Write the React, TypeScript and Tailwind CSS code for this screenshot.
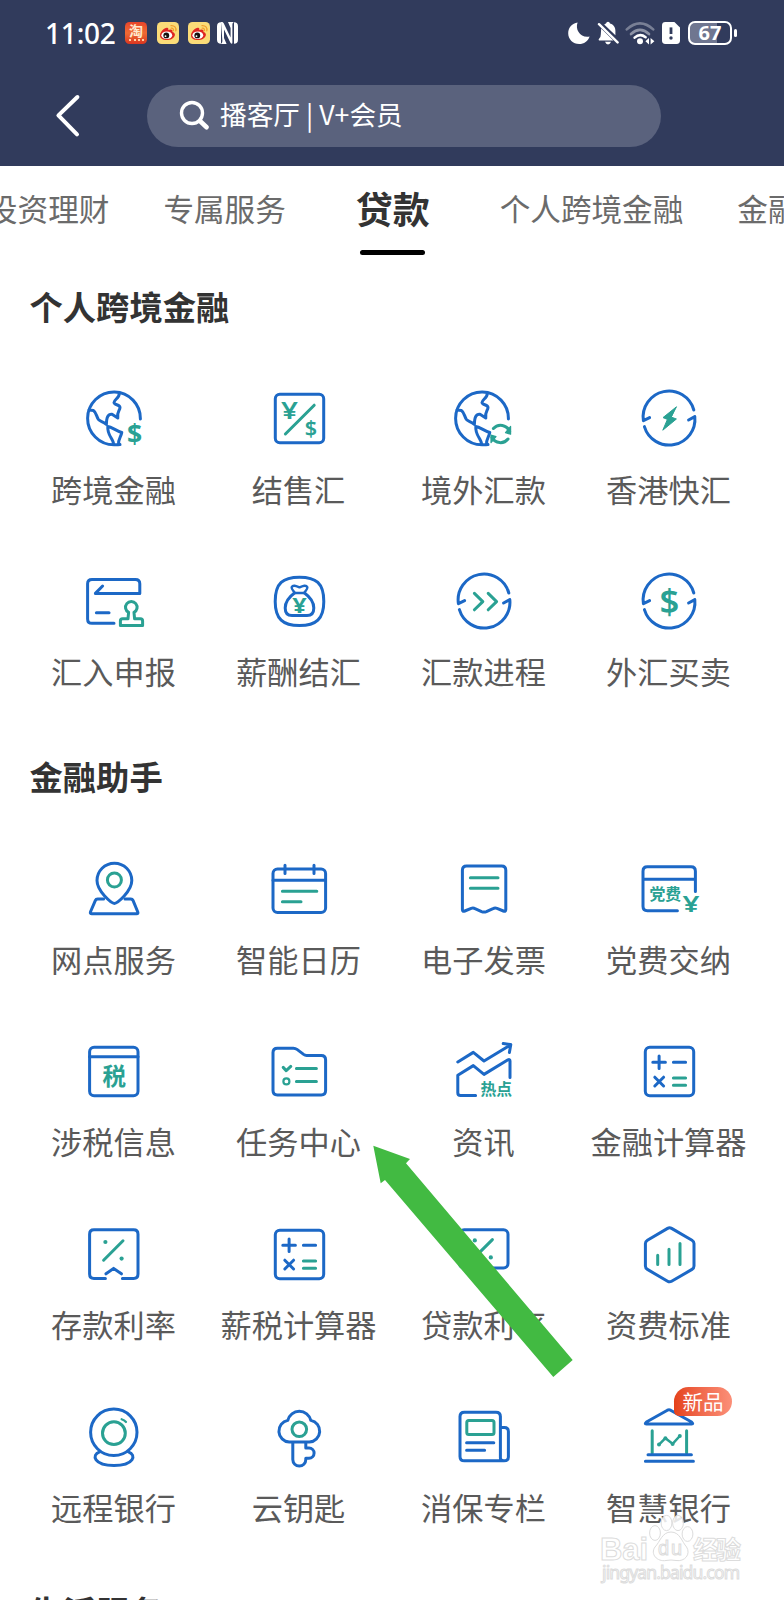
import type { ReactNode } from "react";

const BLUE = "#1c68c6";
const TEAL = "#2aa193";

/* ---------- icon helpers ---------- */

function Icon({ children }: { children: ReactNode }) {
  return (
    <svg
      className="w-[72px] h-[72px] shrink-0"
      viewBox="0 0 72 72"
      fill="none"
      stroke={BLUE}
      strokeWidth={3}
      strokeLinecap="round"
      strokeLinejoin="round"
    >
      {children}
    </svg>
  );
}

type GlyphProps = {
  x: number;
  y: number;
  size: number;
  children: string;
  latin?: boolean;
  weight?: number;
  width?: number;
};

function Glyph({ x, y, size, children, latin, weight = 600, width }: GlyphProps) {
  return (
    <text
      x={x}
      y={y}
      fontSize={size}
      fontWeight={weight}
      textAnchor="middle"
      textLength={width}
      lengthAdjust="spacingAndGlyphs"
      fill={TEAL}
      stroke="none"
      className={latin ? "font-['Noto_Sans',sans-serif]" : "font-['Noto_Sans_CJK_SC',sans-serif]"}
    >
      {children}
    </text>
  );
}

function Globe() {
  return (
    <>
      <path d="M62.4 36A26.4 26.4 0 1 0 36 61.8Q39 62 42 61.6" />
      <path d="M41.3 10.5C41.5 15 36 16.5 36 19.5C36 22 42 21.5 42 24.5C42 27.5 38.5 29 39.8 35L34 31.3C30 31 28.5 34 28.4 41.5C25.5 38.5 22 38.5 20.3 36.3C18.5 33.5 18 29 15.5 27.6L11 27" />
      <path d="M29.8 43.5C34 44 38 48 43.8 49.5C43 54 40 56 40.5 61.5M35.5 61.5C36 56 29 53 29.8 43.5" />
    </>
  );
}

function CycleRing() {
  return (
    <>
      <path d="M16.6 34.6L10.4 37.6A25.8 25.8 0 0 1 60.8 27" />
      <path d="M11.4 43.6A25.8 25.8 0 0 0 61.8 33.6L55.6 37" />
    </>
  );
}

function Calculator() {
  return (
    <Icon>
      <rect x="12.3" y="11.3" width="48.4" height="48.4" rx="4.5" />
      <path d="M19.8 26.3H32.4M26.1 20V32.6M40.4 26.3H52.6" />
      <path d="M21.8 41.2L30.6 50M30.6 41.2L21.8 50" />
      <path d="M40.4 42H52.6M40.4 49.3H52.6" stroke={TEAL} />
    </Icon>
  );
}

/* ---------- icons ---------- */

const icons: Record<string, ReactNode> = {
  globeDollar: (
    <Icon>
      <Globe />
      <Glyph x={56.7} y={60.6} size={26.5} latin weight={700}>$</Glyph>
    </Icon>
  ),
  exchange: (
    <Icon>
      <rect x="12.3" y="11.3" width="48.4" height="48.4" rx="4.5" />
      <path d="M51.2 22.2L22.4 51" stroke={TEAL} />
      <Glyph x={26.5} y={36.2} size={24} latin width={17}>¥</Glyph>
      <Glyph x={47.8} y={52.8} size={21.5} latin>$</Glyph>
    </Icon>
  ),
  globeCycle: (
    <Icon>
      <g transform="translate(-2 0)">
        <Globe />
      </g>
      <g stroke={TEAL}>
        <path d="M45.4 45.5A9.6 9.6 0 0 1 61.6 48.5M60 56A9.6 9.6 0 0 1 44 54.5" />
        <path d="M62.6 43.5V51.2L57.5 49.6ZM43 59.5V52.2L48 53.6Z" fill={TEAL} strokeWidth={1.2} />
      </g>
    </Icon>
  ),
  bolt: (
    <Icon>
      <CycleRing />
      <path d="M43.2 24L30 34.6L34.4 36.4L29.8 47.2L43.4 36L38.6 34.2Z" fill={TEAL} stroke={TEAL} strokeWidth={1} />
    </Icon>
  ),
  declare: (
    <Icon>
      <path d="M36 57.3H14Q9.6 57.3 9.6 52.9V17.8Q9.6 13.5 14 13.5H57.4Q61.8 13.5 61.8 17.8V27.4H17.4L24.6 20" />
      <path d="M18.4 46.7H31" />
      <path
        d="M50.6 46.4A5.8 5.8 0 1 1 56 46.4L56.6 52.8H62.4Q64.6 52.8 64.6 55V59.4H42.4V55Q42.4 52.8 44.6 52.8H50Z"
        stroke={TEAL}
      />
    </Icon>
  ),
  moneyBag: (
    <Icon>
      <path d="M36.5 11.2C53 11.2 60.8 17 60.8 35.4C60.8 53 53 59.6 36.5 59.6S12.2 53 12.2 35.4C12.2 17 20 11.2 36.5 11.2Z" />
      <path d="M32 27C30 24.5 28.4 23.5 28.6 21.2C30 18.6 33 20 36.5 21.4C40 20 43 18.6 44.4 21.2C44.6 23.5 43 24.5 41 27Z" strokeWidth={2.4} />
      <path d="M31.5 27C26 31 22.2 36 22.2 42Q22.2 49.6 29 49.6H44Q50.8 49.6 50.8 42C50.8 36 47 31 41.5 27" />
      <Glyph x={36.5} y={46.6} size={21.5} latin weight={700} width={14.5}>¥</Glyph>
    </Icon>
  ),
  progress: (
    <Icon>
      <CycleRing />
      <path d="M26.4 27.4L34.8 35.6L26.4 43.8M40.2 27.4L48.6 35.6L40.2 43.8" stroke={TEAL} />
    </Icon>
  ),
  dollarCycle: (
    <Icon>
      <CycleRing />
      <Glyph x={36.4} y={47.8} size={34.5} latin>$</Glyph>
    </Icon>
  ),
  branch: (
    <Icon>
      <path d="M36.4 50.4C33.6 50.4 19 38.4 19 27.6A17.4 17.4 0 0 1 53.8 27.6C53.8 38.4 39.2 50.4 36.4 50.4Z" />
      <path d="M25.6 46H19.6Q18 46 17.4 47.4L12.4 59Q12 60.8 13.8 60.8H58.6Q60.4 60.8 59.8 59L55 47.4Q54.4 46 52.8 46H47" />
      <circle cx="36.4" cy="27" r="7" stroke={TEAL} />
    </Icon>
  ),
  calendar: (
    <Icon>
      <rect x="10" y="16" width="52.6" height="43.6" rx="4.5" />
      <path d="M10 27.2H62.6M22 12.2V20.4M51 12.2V20.4" />
      <path d="M19.4 38.3H53.8M19.4 48.7H38" stroke={TEAL} />
    </Icon>
  ),
  invoice: (
    <Icon>
      <path d="M18.6 13H53.6Q57.8 13 57.8 17.2V56.6Q57.8 59 55.4 58L49 55.4Q47 54.6 45 55.6L38.4 58.6Q36 59.6 33.6 58.6L27 55.6Q25.2 54.6 23.2 55.4L16.8 58Q14.4 59 14.4 56.6V17.2Q14.4 13 18.6 13Z" />
      <path d="M22.4 24.7H50M22.4 35.2H50" stroke={TEAL} />
    </Icon>
  ),
  partyFee: (
    <Icon>
      <path d="M44.4 57.7H14.4Q10 57.7 10 53.3V18.2Q10 13.8 14.4 13.8H58Q62.4 13.8 62.4 18.2V38.4M10 26.2H62.4" />
      <Glyph x={32.2} y={47.2} size={15.8} weight={700}>党费</Glyph>
      <Glyph x={58} y={59.2} size={22} latin width={17}>¥</Glyph>
    </Icon>
  ),
  tax: (
    <Icon>
      <rect x="11.6" y="11.3" width="48.4" height="48.4" rx="4.5" />
      <path d="M11.6 20.8H60" />
      <Glyph x={36.2} y={48.6} size={23.5} weight={700}>税</Glyph>
    </Icon>
  ),
  task: (
    <Icon>
      <path d="M14.4 12.2H30.4Q32.4 12.2 34 13.4L40.6 18.4Q42 19.4 43.6 19.4H58.2Q62.6 19.4 62.6 23.8V54.6Q62.6 59 58.2 59H14.4Q10 59 10 54.6V16.6Q10 12.2 14.4 12.2Z" />
      <path d="M20.2 31.4L23.2 34.6L27.8 30.4M33.4 32.6H53.4M33.4 45.6H53.4" stroke={TEAL} />
      <circle cx="23.4" cy="45.4" r="3" stroke={TEAL} strokeWidth={2.2} />
    </Icon>
  ),
  news: (
    <Icon>
      <path d="M9.8 26L25.3 16.4L36 25L62.4 9M55.2 7.6L62.8 8.6L61.4 16.4" />
      <path d="M27.6 59.6H12.6Q9.8 59.6 9.8 56.8V39.2L25.3 29.6L36 38.4L60 23.8Q62 23 62 25V41.6" />
      <Glyph x={48.2} y={59.2} size={15.8} weight={700}>热点</Glyph>
    </Icon>
  ),
  calculator: <Calculator />,
  deposit: (
    <Icon>
      <path d="M27.4 59.4H16Q11.6 59.4 11.6 55V15.2Q11.6 10.8 16 10.8H55.6Q60 10.8 60 15.2V55Q60 59.4 55.6 59.4H44.4" />
      <path d="M28 54.8L35.6 49.4L43.4 54.8" />
      <path d="M45 21.8L25.6 41.2" stroke={TEAL} />
      <circle cx="27.4" cy="23" r="2.1" fill={TEAL} stroke="none" />
      <circle cx="43.6" cy="39.6" r="2.1" fill={TEAL} stroke="none" />
    </Icon>
  ),
  loan: (
    <Icon>
      <rect x="11.6" y="10.8" width="48.4" height="38.2" rx="4.5" />
      <path d="M44.4 20.6L25.6 39.4" stroke={TEAL} />
      <circle cx="26.8" cy="21.4" r="2.1" fill={TEAL} stroke="none" />
      <circle cx="42.8" cy="38.4" r="2.1" fill={TEAL} stroke="none" />
    </Icon>
  ),
  tariff: (
    <Icon>
      <path d="M34.6 9.4Q36.6 8.2 38.6 9.4L59 21.2Q61 22.4 61 24.6V47Q61 49.2 59 50.4L38.6 62.2Q36.6 63.4 34.6 62.2L14.4 50.4Q12.4 49.2 12.4 47V24.6Q12.4 22.4 14.4 21.2Z" />
      <path d="M24.7 36.2V45.6M36 30.2V45.6M47 24.6V45.6" stroke={TEAL} />
    </Icon>
  ),
  webcam: (
    <Icon>
      <circle cx="35.8" cy="31.3" r="23.2" />
      <circle cx="35.9" cy="32.2" r="11.4" stroke={TEAL} />
      <path d="M43.6 18.2Q46.4 19 48 21" stroke={TEAL} strokeWidth={2.2} />
      <path d="M21.6 50.8C13 54 16 64.4 36 64.4S59 54 50.4 50.8" />
    </Icon>
  ),
  cloudKey: (
    <Icon>
      <path d="M24.8 19.4A11.8 11.8 0 0 1 47.8 19.4A10.9 10.9 0 0 1 46.4 41H26.2A10.9 10.9 0 0 1 24.8 19.4Z" />
      <path d="M29.8 41.4V58.6A6.5 6.5 0 0 0 42.8 58.6V57.2H46A5.1 5.1 0 0 0 46 47H42.8V41.4" />
      <circle cx="36.3" cy="28.3" r="7.3" stroke={TEAL} />
    </Icon>
  ),
  newspaper: (
    <Icon>
      <path d="M57 59.8H16.4Q12 59.8 12 55.4V15.6Q12 11.2 16.4 11.2H48Q52.4 11.2 52.4 15.6V57Q52.4 59.8 56 59.8Q60.4 59.8 60.4 56V30.6Q60.4 26.6 56.4 26.6H53" />
      <rect x="18.8" y="19.4" width="27.2" height="14" rx="2" stroke={TEAL} />
      <path d="M18.6 41.7H45.8M18.6 49.3H36.6" />
    </Icon>
  ),
  bank: (
    <Icon>
      <path d="M34.4 9.2Q36 8.4 37.6 9.2L58.6 21Q60.8 23 58.6 23H13.4Q11.2 23 13.4 21Z" />
      <path d="M19.2 29.8V52M53.6 29.8V52" stroke={TEAL} />
      <path d="M26 43.6L32.4 37.2L39.6 42.8L46.8 35" stroke={TEAL} strokeWidth={2.5} />
      <circle cx="26" cy="43.6" r="2" fill={TEAL} stroke="none" />
      <circle cx="39.6" cy="43" r="2" fill={TEAL} stroke="none" />
      <circle cx="32.4" cy="37.2" r="2" fill={TEAL} stroke="none" />
      <circle cx="46.8" cy="35" r="2" fill={TEAL} stroke="none" />
      <path d="M15 53.8H58.4M12.4 60.3H60.4" />
    </Icon>
  ),
};

/* ---------- data ---------- */

type Item = { label: string; icon: string; badge?: string };

const sections: { title: string; items: Item[] }[] = [
  {
    title: "个人跨境金融",
    items: [
      { label: "跨境金融", icon: "globeDollar" },
      { label: "结售汇", icon: "exchange" },
      { label: "境外汇款", icon: "globeCycle" },
      { label: "香港快汇", icon: "bolt" },
      { label: "汇入申报", icon: "declare" },
      { label: "薪酬结汇", icon: "moneyBag" },
      { label: "汇款进程", icon: "progress" },
      { label: "外汇买卖", icon: "dollarCycle" },
    ],
  },
  {
    title: "金融助手",
    items: [
      { label: "网点服务", icon: "branch" },
      { label: "智能日历", icon: "calendar" },
      { label: "电子发票", icon: "invoice" },
      { label: "党费交纳", icon: "partyFee" },
      { label: "涉税信息", icon: "tax" },
      { label: "任务中心", icon: "task" },
      { label: "资讯", icon: "news" },
      { label: "金融计算器", icon: "calculator" },
      { label: "存款利率", icon: "deposit" },
      { label: "薪税计算器", icon: "calculator" },
      { label: "贷款利率", icon: "loan" },
      { label: "资费标准", icon: "tariff" },
      { label: "远程银行", icon: "webcam" },
      { label: "云钥匙", icon: "cloudKey" },
      { label: "消保专栏", icon: "newspaper" },
      { label: "智慧银行", icon: "bank", badge: "新品" },
    ],
  },
  { title: "生活服务", items: [] },
];

const tabs = ["投资理财", "专属服务", "贷款", "个人跨境金融", "金融助手"];

/* ---------- header ---------- */

function WeiboIcon() {
  return (
    <svg className="w-[22px] h-[22px]" viewBox="0 0 22 22">
      <rect width="22" height="22" rx="4.5" fill="#fbdc78" />
      <path d="M3 13.4C3 9.6 8.4 4.6 10.8 6C11.8 6.6 11.2 8 11.2 8C13 7 16.4 7 15.4 10C17.6 10.6 18.2 12 17.8 13.4C16.8 16.4 13.4 18 10 18C6 18 3 16.2 3 13.4Z" fill="#df2622" />
      <ellipse cx="9.8" cy="13.2" rx="5.4" ry="3.8" fill="#fff" />
      <circle cx="9.3" cy="13.4" r="2.9" fill="#16110f" />
      <circle cx="8.5" cy="14.2" r=".9" fill="#fff" />
      <path d="M14 3.6C17.4 3.2 19.6 5.8 18.8 8.8M14.2 6.2C16 6 16.8 7.2 16.4 8.6" fill="none" stroke="#f3a02b" strokeWidth="1.3" strokeLinecap="round" />
    </svg>
  );
}

function StatusBar() {
  return (
    <div className="flex items-center h-[66px] pl-[45px] pr-[47px] text-white">
      <span className="w-[80px] font-['Noto_Sans',sans-serif] font-medium text-[28px] leading-none tracking-[-0.2px]">
        11:02
      </span>
      <div className="flex items-center gap-[9.5px]">
        <div className="w-[22px] h-[22px] rounded-[4.5px] bg-linear-to-b from-[#e8432a] via-[#ef6a34] to-[#d93420] flex flex-col items-center">
          <span className="text-[14px] leading-[17px] font-bold text-[#ffe9cf]">淘</span>
          <span className="w-[15px] border-t-2 border-dotted border-[#ffd2a8]" />
        </div>
        <WeiboIcon />
        <WeiboIcon />
      </div>
      <svg className="w-[21px] h-[22px] ml-[7px]" viewBox="0 0 21 22" fill="#fff">
        <path d="M4 0L5.400 0Q6.200 .2 6.700 1.200L13.600 15.600V6L11 0H16.800Q15.400 .6 15.400 2.600V20.400Q15.400 21.600 14.600 21.800Q13.800 21.600 13.300 20.600L7 7.400V16L9.600 22H3.800Q5.400 21 5.400 19Z" />
        <path d="M4 .3Q0 .3 0 4.200V17.800Q0 21.700 4 21.700ZM17 .3Q21 .3 21 4.200V17.800Q21 21.700 17 21.700Z" />
      </svg>

      <div className="ml-auto flex items-center">
        <svg className="w-[22px] h-[22px]" viewBox="0 0 22 22" fill="#fff">
          <path d="M9.6 .4C6.8 7.6 12.6 16.2 21.6 14.4C20 19 16 22 11.2 22C5 22 .2 17.2 .2 11.2C.2 5.6 4.2 1 9.6 .4Z" />
        </svg>
        <svg className="w-[22px] h-[24px] ml-[7px]" viewBox="0 0 22 24" fill="#fff">
          <path d="M7.2 3.4Q8.6 2.6 9 2.4Q9.4 .8 11 .8T13 2.4C17.4 3.6 18.4 7 18.4 10V14.2Z" />
          <path d="M4.2 7.4L16.4 19.6H2Q1 18.4 2.4 17.2Q3.8 15.8 3.8 13.4Z" />
          <path d="M8 20.8H14Q13 23.4 11 23.4T8 20.8Z" />
          <path d="M2 3.2L20.6 21.4" stroke="#fff" strokeWidth="2.4" strokeLinecap="round" />
        </svg>
        <svg className="w-[30px] h-[24px] ml-[6px]" viewBox="0 0 30 24" fill="none" stroke="#fff" strokeWidth="2.6" strokeLinecap="round">
          <path d="M1.8 8.4Q15 -3.6 28.2 8.4" opacity=".35" />
          <path d="M6 13Q15 4.8 24 13" opacity=".45" />
          <path d="M9.6 16.6Q15 11.8 20.6 16.2" />
          <circle cx="15" cy="20.2" r="3" fill="#fff" stroke="none" />
          <path d="M20.4 20.2L24 17V23.4ZM29.4 20.2L25.6 17V23.4Z" fill="#fff" stroke="none" />
        </svg>
        <svg className="w-[18px] h-[22px] ml-[7px]" viewBox="0 0 18 22">
          <path d="M3.4 0H12.4L18 5.4V18.6Q18 22 14.6 22H3.4Q0 22 0 18.6V3.4Q0 0 3.4 0Z" fill="#fff" />
          <path d="M9 5.4V12" stroke="#313b5c" strokeWidth="2.8" />
          <circle cx="9" cy="16" r="1.7" fill="#313b5c" />
        </svg>
        <div className="ml-[8px] w-[44px] h-[24px] rounded-[7px] border-2 border-white bg-linear-to-r from-[#6f7690] from-68% to-transparent to-68% flex items-center justify-center">
          <span className="font-['Noto_Sans',sans-serif] font-bold text-[20px] leading-none">67</span>
        </div>
        <span className="ml-[2px] w-[3px] h-[8px] rounded-full bg-white" />
      </div>
    </div>
  );
}

function Header() {
  return (
    <header className="h-[166px] bg-[#313b5c]">
      <StatusBar />
      <div className="flex items-center pt-[19px] pl-[55px]">
        <svg className="w-[26px] h-[44px]" viewBox="0 0 26 44" fill="none" stroke="#fff" strokeWidth="4" strokeLinecap="round" strokeLinejoin="round">
          <path d="M22.400 3L3.400 21.400L22 40.400" />
        </svg>
        <div className="ml-[66px] w-[514px] h-[62px] rounded-full bg-[#5a627d] flex items-center pl-[32px] text-white">
          <svg className="w-[31px] h-[31px] -mt-[2px]" viewBox="0 0 31 31" fill="none" stroke="#fff" strokeLinecap="round">
            <circle cx="13" cy="13" r="10.5" strokeWidth="3.400" />
            <path d="M21 21L27.600 27.200" strokeWidth="4.600" />
          </svg>
          <span className="ml-[10px] -mt-[4px] text-[26.7px] leading-none whitespace-nowrap">播客厅 | V+会员</span>
        </div>
      </div>
    </header>
  );
}

function Tabs() {
  return (
    <nav className="flex h-[94px] -ml-[40px] overflow-hidden text-[30.6px] text-[#6b6b6b] whitespace-nowrap">
      {tabs.map((tab) =>
        tab === "贷款" ? (
          <div key={tab} className="px-[27px] mx-[16px] shrink-0 flex flex-col items-center">
            <span className="h-[84px] leading-[84px] text-[37px] font-bold text-[#333]">{tab}</span>
            <span className="w-[65px] h-[5px] rounded-full bg-black" />
          </div>
        ) : (
          <div key={tab} className="px-[27px] shrink-0 leading-[85px]">
            {tab}
          </div>
        )
      )}
    </nav>
  );
}

/* ---------- page ---------- */

function Watermark() {
  return (
    <svg
      className="absolute left-[598px] top-[1512px] w-[150px] h-[76px]"
      viewBox="0 0 150 76"
      fill="#fff"
      fillOpacity=".85"
      stroke="#dcdcdc"
      strokeWidth="1"
    >
      <text x="2" y="48" fontSize="31" fontWeight="700" textLength="48" className="font-['Liberation_Sans',sans-serif]">Bai</text>
      <ellipse cx="57" cy="21" rx="5.4" ry="7.4" />
      <ellipse cx="68.5" cy="11" rx="5.4" ry="7.6" />
      <ellipse cx="80" cy="11" rx="5.4" ry="7.6" />
      <ellipse cx="89.5" cy="22" rx="5.4" ry="7.4" />
      <path d="M73 20C82 20 84 30 88.6 35C93 42 87 50 78 48.5Q73 47.5 68 48.5C59 50 52 42 57 35C62 30 64 20 73 20Z" />
      <text x="60" y="43" fontSize="20" textLength="24" className="font-['Liberation_Sans',sans-serif]">du</text>
      <text x="95" y="46.5" fontSize="25" fontWeight="700" textLength="48" className="font-['Noto_Sans_CJK_SC',sans-serif]">经验</text>
      <text x="4" y="67" fontSize="17.5" textLength="138" className="font-['Noto_Sans',sans-serif]">jingyan.baidu.com</text>
    </svg>
  );
}

export default function App() {
  return (
    <div className="relative w-[784px] h-[1600px] overflow-hidden bg-white font-['Noto_Sans_CJK_SC',sans-serif]">
      <Header />
      <Tabs />
      {sections.map((section) => (
        <section key={section.title}>
          <h2 className="h-[104.6px] pl-[29.5px] leading-[91px] text-[33.3px] font-bold text-[#333]">{section.title}</h2>
          <div className="grid grid-cols-4 w-[740px] ml-[21px]">
            {section.items.map((item) => (
              <div key={item.label} className="relative h-[182.7px] pt-[18.6px] flex flex-col items-center">
                {icons[item.icon]}
                <span className="mt-[13.4px] text-[31.2px] leading-[40px] text-[#5a5a5a] whitespace-nowrap">
                  {item.label}
                </span>
                {item.badge && (
                  <span className="absolute left-[98px] top-[4px] w-[58px] h-[29px] rounded-[14.5px] rounded-bl-[5px] bg-linear-to-r from-[#e5421a] to-[#fb8f78] text-center text-[20.5px] leading-[28px] text-white">
                    {item.badge}
                  </span>
                )}
              </div>
            ))}
          </div>
        </section>
      ))}

      {/* pointer towards the task centre entry */}
      <svg className="absolute left-[372px] top-[1144px] w-[204px] h-[236px]" viewBox="372 1144 204 236">
        <path d="M373.3 1145.7L410 1159L406 1163.3L572.7 1360L553.3 1377L385 1180L380.7 1183.3Z" fill="#42ba42" />
      </svg>
      <Watermark />
    </div>
  );
}
